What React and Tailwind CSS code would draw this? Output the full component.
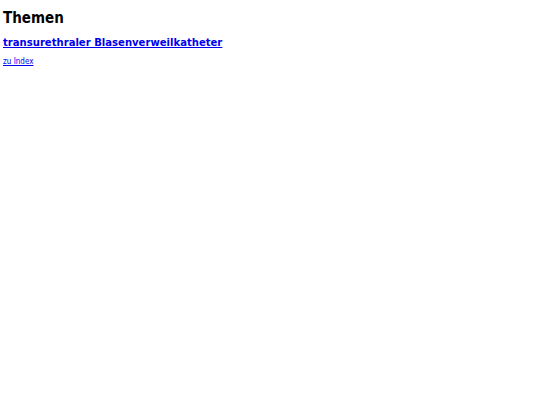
export default function App() {
  return (
    <div className="bg-white min-h-[405px] p-[3px] font-['DejaVu_Sans_Condensed','DejaVu_Sans',sans-serif] text-black">
      <h1 className="text-[15px] font-bold leading-none mt-[7.5px]">Themen</h1>
      <h2 className="text-[11.2px] font-bold leading-none mt-[11px]">
        <a href="#" className="text-[#0000ee] underline">transurethraler Blasenverweilkatheter</a>
      </h2>
      <p className="text-[8px] leading-none mt-[10px]">
        <a href="#" className="text-[#0000ee] underline">zu Index</a>
      </p>
    </div>
  );
}
